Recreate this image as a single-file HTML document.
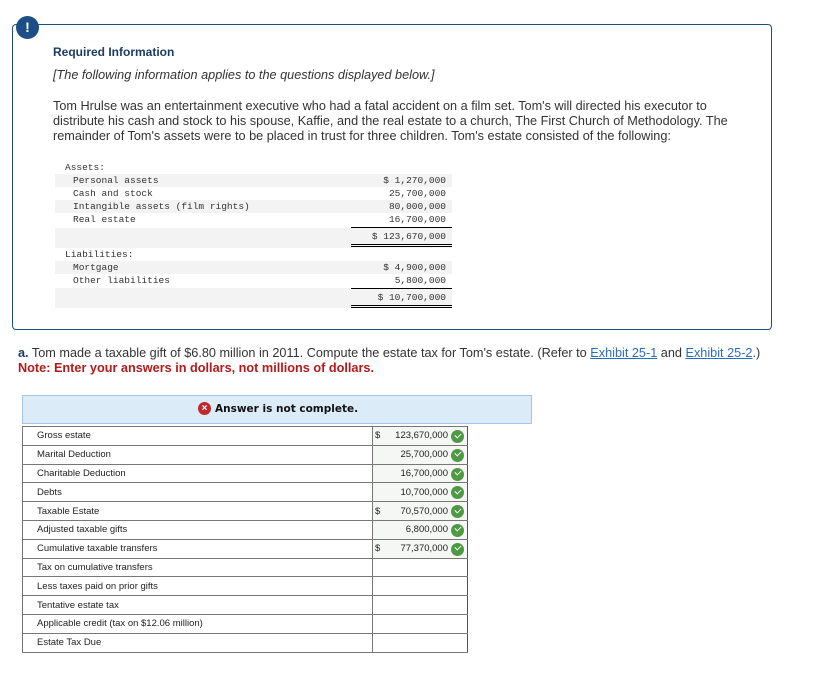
<!DOCTYPE html>
<html><head><meta charset="utf-8"><style>
*{margin:0;padding:0;box-sizing:border-box}
body{width:831px;height:683px;background:#fff;font-family:"Liberation Sans",sans-serif;color:#222;position:relative;overflow:hidden}
.a{position:absolute;white-space:nowrap}
.box{position:absolute;left:12px;top:24px;width:760px;height:306px;border:1px solid #1d4f86;border-radius:4px;border-top-width:1.5px}
.ic{position:absolute;left:16px;top:16px;width:23px;height:23px;border-radius:50%;background:#1d4f86;color:#fff;font-weight:bold;font-size:14px;text-align:center;line-height:23px}
.p{font-size:12.7px;line-height:15px;color:#333}
.m{font-family:"Liberation Mono",monospace;font-size:9.5px;color:#333;line-height:13px}
.g{position:absolute;left:55px;width:397px;height:13px;background:#f3f3f3}
.ul{position:absolute;left:351px;width:101px;border-top:1px solid #000}
.dl{position:absolute;left:351px;width:101px;height:3px;border-top:1px solid #000;border-bottom:1px solid #000}
table{position:absolute;left:22px;top:426px;border-collapse:collapse;font-size:9.5px;color:#222}
td{border:1px solid #777;height:18.8px;padding:0 0 0 14px}
td.v{width:95px;padding:0 19px 0 3px;text-align:right;position:relative;border-left:1px solid #555;border-right:1px solid #555}
td.v.f{background:#f4f7f4}
td.v span.d{position:absolute;left:2px}
.ck{position:absolute;right:3px;top:3px;width:13px;height:13px;border-radius:50%;background:#4e9a44}
.ck:after{content:"";position:absolute;left:3.5px;top:2.5px;width:5px;height:3px;border-left:1.8px solid #fff;border-bottom:1.8px solid #fff;transform:rotate(-45deg)}
a{color:#2a6ebb;text-decoration:underline}
</style></head><body>
<div class="box"></div>
<div class="ic">!</div>
<div class="a" style="left:53px;top:45px;font-weight:bold;font-size:12px;color:#1d3c63">Required Information</div>
<div class="a p" style="left:53px;top:68px;font-style:italic">[The following information applies to the questions displayed below.]</div>
<div class="a p" style="left:53px;top:99px">Tom Hrulse was an entertainment executive who had a fatal accident on a film set. Tom's will directed his executor to</div>
<div class="a p" style="left:53px;top:114px">distribute his cash and stock to his spouse, Kaffie, and the real estate to a church, The First Church of Methodology. The</div>
<div class="a p" style="left:53px;top:129px">remainder of Tom's assets were to be placed in trust for three children. Tom's estate consisted of the following:</div>

<div class="g" style="top:174px"></div><div class="g" style="top:200px"></div><div class="g" style="top:228px;height:20px"></div>
<div class="g" style="top:261px"></div><div class="g" style="top:288px;height:20px"></div>
<div class="a m" style="left:65px;top:161px">Assets:</div>
<div class="a m" style="left:73px;top:174px">Personal assets</div>
<div class="a m" style="left:73px;top:187px">Cash and stock</div>
<div class="a m" style="left:73px;top:200px">Intangible assets (film rights)</div>
<div class="a m" style="left:73px;top:213px">Real estate</div>
<div class="a m" style="right:385px;top:174px">$ 1,270,000</div>
<div class="a m" style="right:385px;top:187px">25,700,000</div>
<div class="a m" style="right:385px;top:200px">80,000,000</div>
<div class="a m" style="right:385px;top:213px">16,700,000</div>
<div class="ul" style="top:227px"></div>
<div class="a m" style="right:385px;top:230px">$ 123,670,000</div>
<div class="dl" style="top:244px"></div>
<div class="a m" style="left:65px;top:248px">Liabilities:</div>
<div class="a m" style="left:73px;top:261px">Mortgage</div>
<div class="a m" style="left:73px;top:274px">Other liabilities</div>
<div class="a m" style="right:385px;top:261px">$ 4,900,000</div>
<div class="a m" style="right:385px;top:274px">5,800,000</div>
<div class="ul" style="top:288px"></div>
<div class="a m" style="right:385px;top:291px">$ 10,700,000</div>
<div class="dl" style="top:305px"></div>

<div class="a p" style="left:18px;top:346px"><b style="color:#1d3c63">a.</b> Tom made a taxable gift of $6.80 million in 2011. Compute the estate tax for Tom's estate. (Refer to <a>Exhibit 25-1</a> and <a>Exhibit 25-2</a>.)</div>
<div class="a p" style="left:18px;top:361px;font-weight:bold;color:#b31b1b">Note: Enter your answers in dollars, not millions of dollars.</div>

<div class="a" style="left:22px;top:395px;width:510px;height:29px;background:#dcebf8;border:1px solid #a7c6e5"></div>
<div class="a" style="left:198px;top:402px;width:13px;height:13px;border-radius:50%;background:#c1272d;color:#fff;font-size:10px;font-weight:bold;text-align:center;line-height:13px">×</div>
<div class="a" style="left:215px;top:403px;font-family:'DejaVu Sans',sans-serif;font-weight:bold;font-size:10.5px;color:#111">Answer is not complete.</div>

<table>
<tr><td style="width:350px">Gross estate</td><td class="v f"><span class="d">$</span>123,670,000<i class="ck"></i></td></tr>
<tr><td>Marital Deduction</td><td class="v f">25,700,000<i class="ck"></i></td></tr>
<tr><td>Charitable Deduction</td><td class="v f">16,700,000<i class="ck"></i></td></tr>
<tr><td>Debts</td><td class="v f">10,700,000<i class="ck"></i></td></tr>
<tr><td>Taxable Estate</td><td class="v f"><span class="d">$</span>70,570,000<i class="ck"></i></td></tr>
<tr><td>Adjusted taxable gifts</td><td class="v f">6,800,000<i class="ck"></i></td></tr>
<tr><td>Cumulative taxable transfers</td><td class="v f"><span class="d">$</span>77,370,000<i class="ck"></i></td></tr>
<tr><td>Tax on cumulative transfers</td><td class="v"></td></tr>
<tr><td>Less taxes paid on prior gifts</td><td class="v"></td></tr>
<tr><td>Tentative estate tax</td><td class="v"></td></tr>
<tr><td>Applicable credit (tax on $12.06 million)</td><td class="v"></td></tr>
<tr><td>Estate Tax Due</td><td class="v"></td></tr>
</table>
</body></html>
